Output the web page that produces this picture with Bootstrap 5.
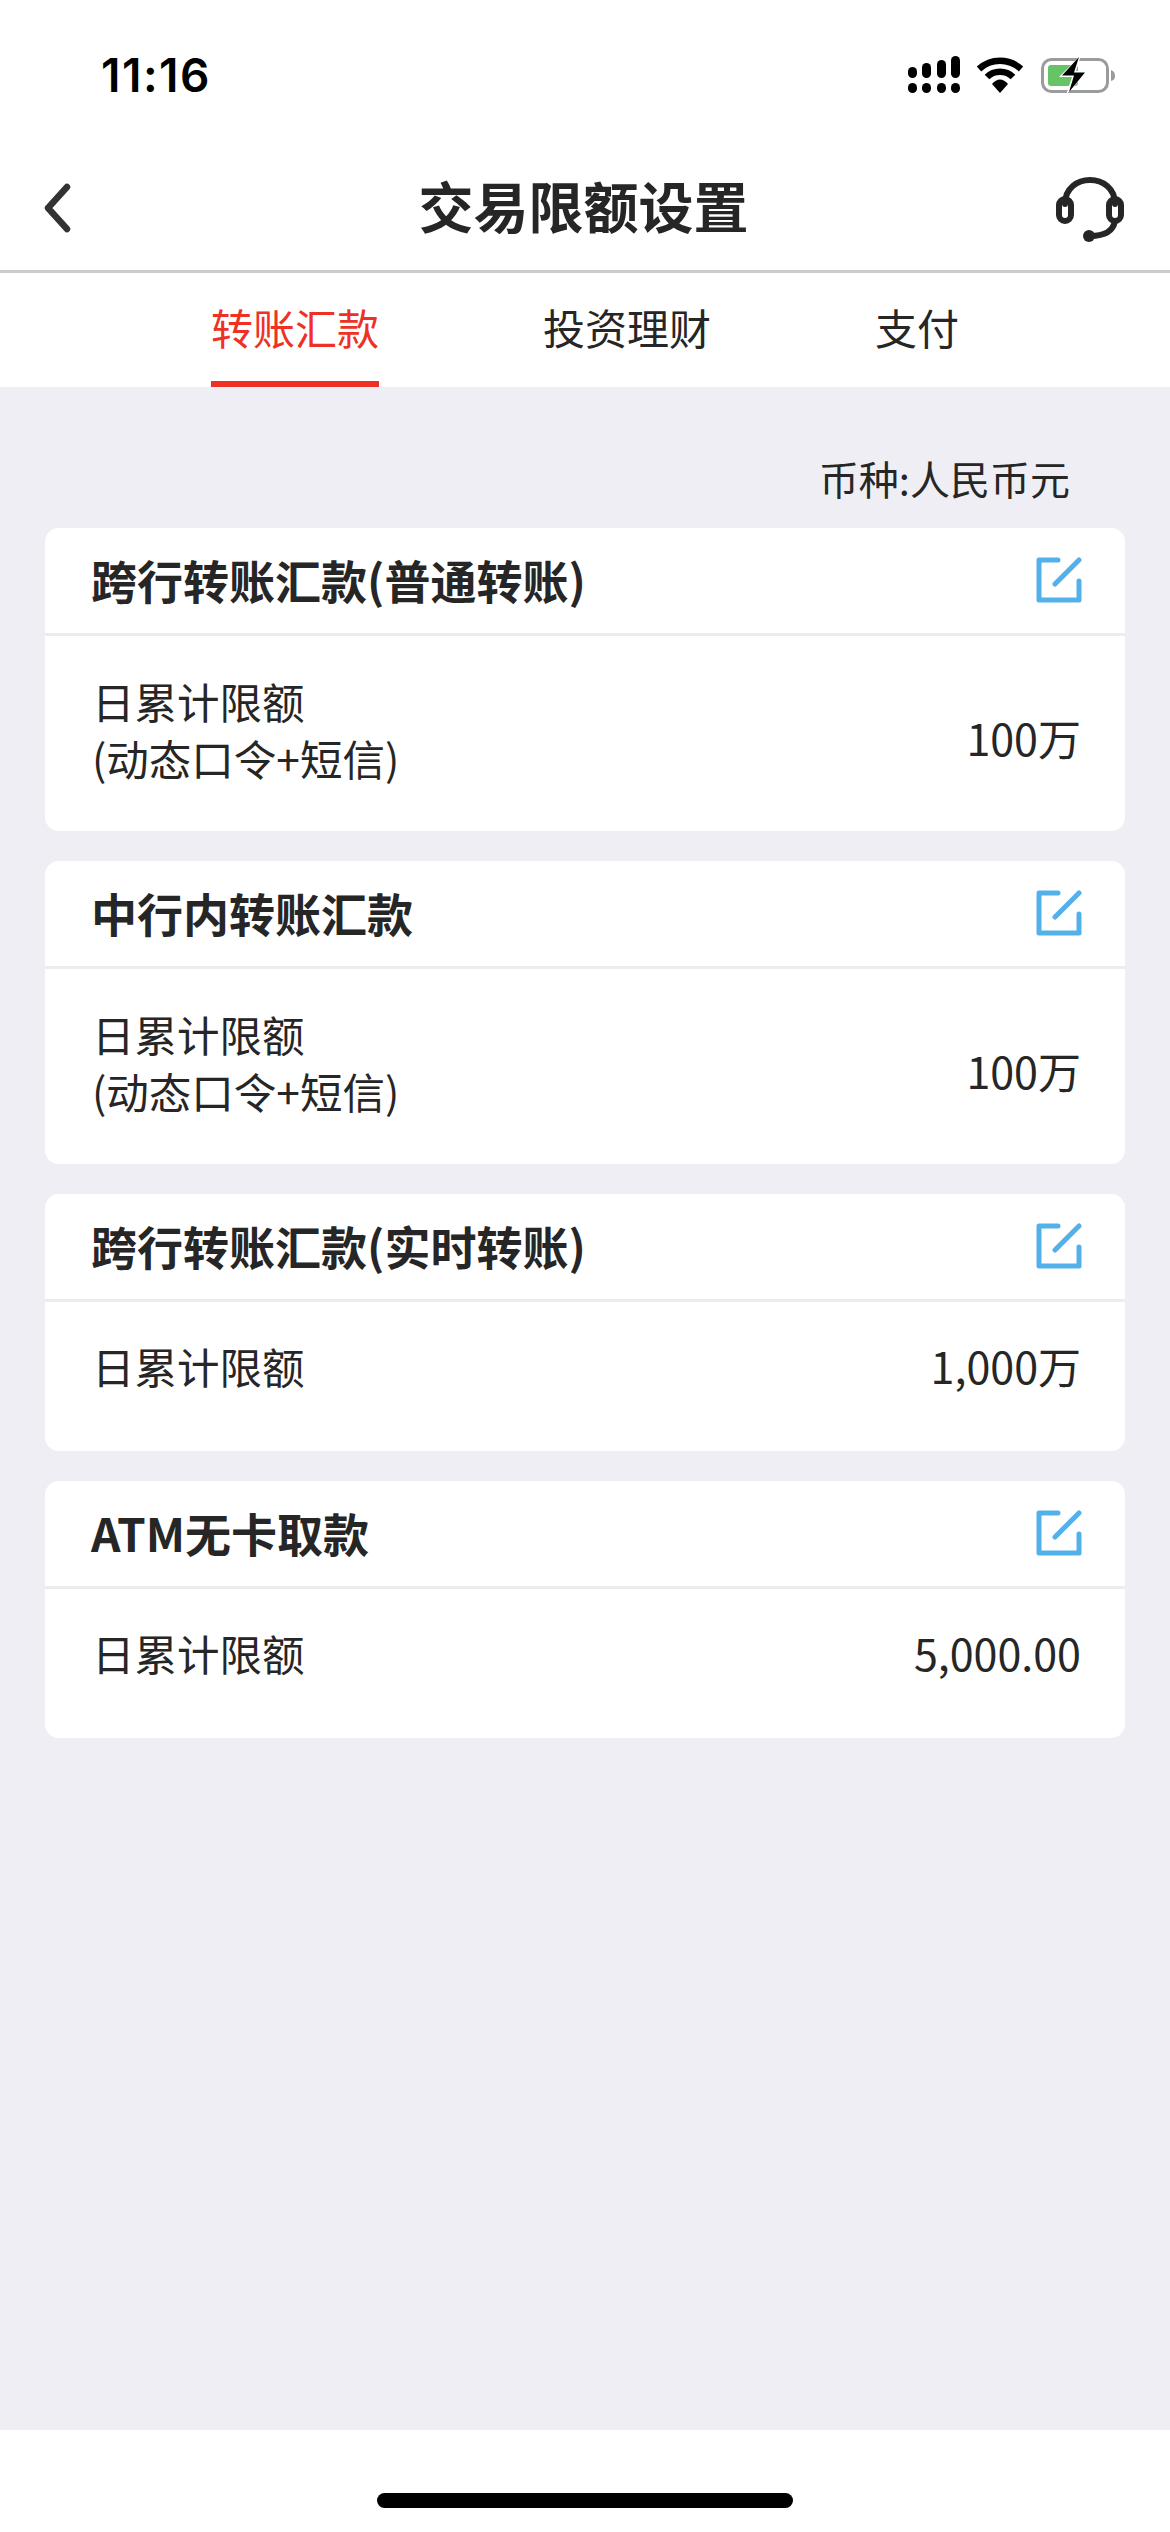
<!DOCTYPE html>
<html lang="zh-CN">
<head>
    <meta charset="UTF-8">
    <meta name="viewport" content="width=device-width, initial-scale=1.0">
    <title>交易限额设置</title>
    <link href="https://cdn.jsdelivr.net/npm/bootstrap@5.3.0/dist/css/bootstrap.min.css" rel="stylesheet">
    <style>
        body {
            font-family: "Noto Sans CJK SC", "Noto Sans", sans-serif;
            color: #262626;
            background: #fff;
            min-height: 2532px;
        }
        .status-bar { height: 146px; padding: 48px 53px 0 101px; }
        .status-time { font-family: Inter, "Liberation Sans", sans-serif; font-size: 46px; line-height: 54px; font-weight: 600; color: #000; letter-spacing: 1.5px; }
        .status-icons { height: 54px; gap: 17px; }
        .wifi-icon { margin-left: -1px; }
        .top-bar { height: 124px; padding: 0 45px 0 42px; }
        .top-side { width: 70px; }
        .top-title { font-size: 55px; line-height: 70px; font-weight: 700; margin: 0 0 8px; }
        .headset-icon { margin-top: 2px; }
        .top-rule { height: 3px; background: #cccccc; }
        .tab-strip { height: 114px; padding-left: 211px; gap: 164px; flex-wrap: nowrap; }
        .tab-strip .nav-link { height: 114px; padding: 11px 0 0; font-size: 42px; line-height: 86px; color: #262626; border-bottom: 6px solid transparent; }
        .tab-strip .nav-link.active { color: #ee3124; border-bottom-color: #ee3124; }
        .limits-area { background: #efeef4; padding: 62px 45px 0; }
        .currency-note { font-size: 40px; line-height: 58px; padding-right: 55px; margin-bottom: 21px; }
        .limit-card { border: 0; border-radius: 14px; margin-bottom: 30px; background: #fff; color: #262626; }
        .limit-card .card-header { height: 108px; padding: 0 43px 3px 46px; background: transparent; border-bottom: 3px solid #ebebf0; }
        .limit-title { font-size: 46px; line-height: 60px; font-weight: 700; }
        .edit-icon { margin-top: 2px; }
        .limit-card .card-body { padding: 0 44px 0 47px; font-size: 43px; }
        .body-tall { height: 195px; }
        .body-short { height: 149px; padding-top: 35px !important; }
        .limit-name { line-height: 57px; font-size: 42.5px; }
        .limit-value { line-height: 57px; }
        .body-tall .limit-name { margin-bottom: 10px; }
        .body-tall .limit-value { margin-top: 8px; }
        .home-strip { height: 102px; padding-top: 63px; }
        .home-bar { width: 416px; height: 15px; border-radius: 8px; background: #000; }
    </style>
</head>
<body class="d-flex flex-column">
    <!-- status bar -->
    <div class="status-bar d-flex justify-content-between align-items-start">
        <span class="status-time">11:16</span>
        <div class="status-icons d-flex align-items-center">
            <svg width="52" height="38" viewBox="0 0 52 38">
                <g fill="#000">
                    <rect x="0" y="11" width="9" height="11" rx="4.5"/>
                    <rect x="14" y="7" width="9" height="15" rx="4.5"/>
                    <rect x="29" y="4" width="9" height="18" rx="4.5"/>
                    <rect x="43" y="0" width="9" height="22" rx="4.5"/>
                    <rect x="0" y="27" width="9" height="10" rx="4.5"/>
                    <rect x="14" y="27" width="9" height="10" rx="4.5"/>
                    <rect x="29" y="27" width="9" height="10" rx="4.5"/>
                    <rect x="43" y="27" width="9" height="10" rx="4.5"/>
                </g>
            </svg>
            <svg class="wifi-icon" width="48" height="36" viewBox="0 0 48 36">
                <path d="M3 12 C15 1 33 1 45 12" fill="none" stroke="#000" stroke-width="6.5"/>
                <path d="M11 20 C18 13 30 13 37 20" fill="none" stroke="#000" stroke-width="6.5"/>
                <path d="M16 27 C21 21 27 21 32 27 L24 36 Z" fill="#000"/>
            </svg>
            <svg width="76" height="38" viewBox="0 0 76 38">
                <rect x="1.5" y="3.5" width="65" height="32" rx="9" fill="none" stroke="#9b9b9b" stroke-width="3"/>
                <rect x="7" y="9" width="30" height="21" rx="3" fill="#65c466"/>
                <path d="M70 14 C73 15 74 17 74 20 C74 23 73 24 70 25 Z" fill="#9b9b9b"/>
                <path d="M40 -1 L18 21 L31 21 L25 39 L47 15 L35 15 Z" fill="#fff"/>
                <path d="M38 1 L21 19.500 L33 19.500 L28 36 L44 16.500 L33 16.500 Z" fill="#000"/>
            </svg>
        </div>
    </div>

    <!-- title bar -->
    <div class="top-bar d-flex justify-content-between align-items-center">
        <div class="top-side">
            <svg class="d-block" width="30" height="50" viewBox="0 0 30 50">
                <path d="M25 4 L6 25 L25 46" fill="none" stroke="#333" stroke-width="6.500" stroke-linecap="round" stroke-linejoin="round"/>
            </svg>
        </div>
        <h1 class="top-title">交易限额设置</h1>
        <div class="top-side">
            <svg class="d-block headset-icon" width="70" height="70" viewBox="0 0 70 70">
                <g fill="none" stroke="#262626" stroke-width="6" stroke-linecap="round">
                    <path d="M10 30 C10 -2 60 -2 60 30"/>
                    <rect x="4" y="25" width="12" height="22" rx="6"/>
                    <rect x="54" y="25" width="12" height="22" rx="6"/>
                    <path d="M60 47 C58 58 48 62 35 62"/>
                </g>
                <circle cx="34" cy="62" r="6" fill="#262626"/>
            </svg>
        </div>
    </div>
    <div class="top-rule"></div>

    <!-- tabs -->
    <ul class="nav tab-strip">
        <li class="nav-item"><a class="nav-link active" href="#">转账汇款</a></li>
        <li class="nav-item"><a class="nav-link" href="#">投资理财</a></li>
        <li class="nav-item"><a class="nav-link" href="#">支付</a></li>
    </ul>

    <main class="limits-area flex-grow-1">
        <div class="currency-note text-end">币种:人民币元</div>

        <div class="card limit-card">
            <div class="card-header d-flex justify-content-between align-items-center">
                <span class="limit-title">跨行转账汇款(普通转账)</span>
                <svg class="edit-icon" width="46" height="46" viewBox="0 0 46 46"><path d="M22 3 H3 V43 H43 V24 M19 27 L43 3" fill="none" stroke="#52b1ea" stroke-width="5" stroke-linecap="round" stroke-linejoin="round"/></svg>
            </div>
            <div class="card-body body-tall d-flex justify-content-between align-items-center">
                <div class="limit-name">日累计限额<br>(动态口令+短信)</div>
                <div class="limit-value">100万</div>
            </div>
        </div>

        <div class="card limit-card">
            <div class="card-header d-flex justify-content-between align-items-center">
                <span class="limit-title">中行内转账汇款</span>
                <svg class="edit-icon" width="46" height="46" viewBox="0 0 46 46"><path d="M22 3 H3 V43 H43 V24 M19 27 L43 3" fill="none" stroke="#52b1ea" stroke-width="5" stroke-linecap="round" stroke-linejoin="round"/></svg>
            </div>
            <div class="card-body body-tall d-flex justify-content-between align-items-center">
                <div class="limit-name">日累计限额<br>(动态口令+短信)</div>
                <div class="limit-value">100万</div>
            </div>
        </div>

        <div class="card limit-card">
            <div class="card-header d-flex justify-content-between align-items-center">
                <span class="limit-title">跨行转账汇款(实时转账)</span>
                <svg class="edit-icon" width="46" height="46" viewBox="0 0 46 46"><path d="M22 3 H3 V43 H43 V24 M19 27 L43 3" fill="none" stroke="#52b1ea" stroke-width="5" stroke-linecap="round" stroke-linejoin="round"/></svg>
            </div>
            <div class="card-body body-short d-flex justify-content-between align-items-start">
                <div class="limit-name">日累计限额</div>
                <div class="limit-value">1,000万</div>
            </div>
        </div>

        <div class="card limit-card">
            <div class="card-header d-flex justify-content-between align-items-center">
                <span class="limit-title">ATM无卡取款</span>
                <svg class="edit-icon" width="46" height="46" viewBox="0 0 46 46"><path d="M22 3 H3 V43 H43 V24 M19 27 L43 3" fill="none" stroke="#52b1ea" stroke-width="5" stroke-linecap="round" stroke-linejoin="round"/></svg>
            </div>
            <div class="card-body body-short d-flex justify-content-between align-items-start">
                <div class="limit-name">日累计限额</div>
                <div class="limit-value">5,000.00</div>
            </div>
        </div>
    </main>

    <div class="home-strip d-flex justify-content-center">
        <div class="home-bar"></div>
    </div>
</body>
</html>
